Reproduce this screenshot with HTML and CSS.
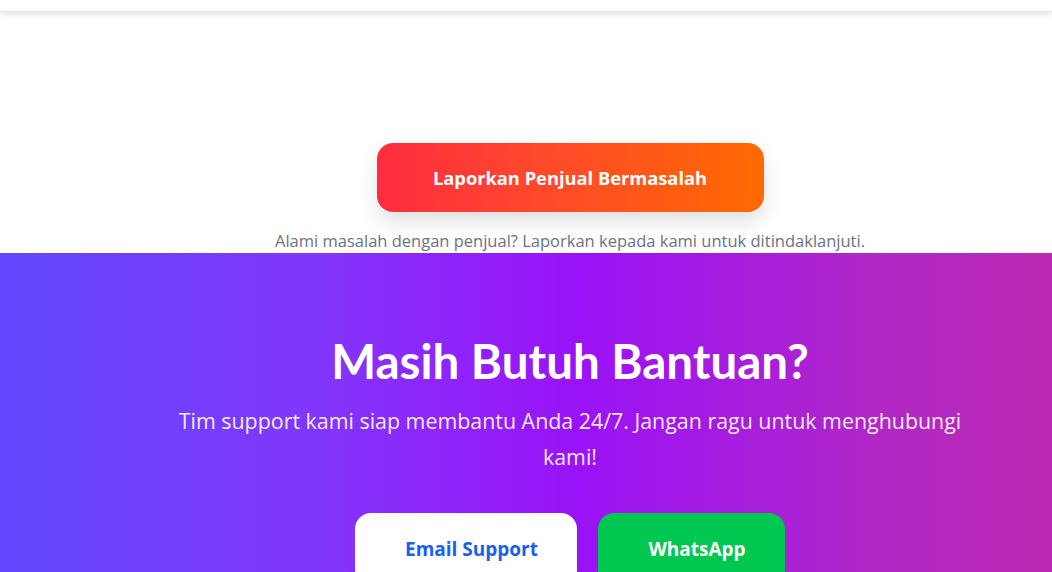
FILE: index.html
```html
<!DOCTYPE html>
<html lang="id">
<head>
<meta charset="utf-8">
<title>Bantuan</title>
<link rel="stylesheet" href="styles.css">
</head>
<body>
<header class="topbar"></header>
<section class="report">
  <button class="report-btn">Laporkan Penjual Bermasalah</button>
  <p class="report-note">Alami masalah dengan penjual? Laporkan kepada kami untuk ditindaklanjuti.</p>
</section>
<section class="cta">
  <h2 class="cta-title">Masih Butuh Bantuan?</h2>
  <p class="cta-text">Tim support kami siap membantu Anda 24/7. Jangan ragu untuk menghubungi kami!</p>
  <div class="cta-actions">
    <a class="btn btn-email" href="#"><span class="btn-icon"></span>Email Support</a>
    <a class="btn btn-wa" href="#"><span class="btn-icon"></span>WhatsApp</a>
  </div>
</section>
</body>
</html>
```
FILE: styles.css
```css
* { box-sizing: border-box; }
html, body { margin: 0; padding: 0; }
body {
  font-family: "Open Sans", sans-serif;
  background: #ffffff;
  overflow: hidden;
  height: 572px;
}
.topbar {
  height: 12px;
  background: #ffffff;
  border-bottom: 1px solid #e6e6e6;
  box-shadow: 0 2px 6px rgba(0,0,0,0.12);
  position: relative;
  z-index: 2;
}
.report {
  display: flex;
  flex-direction: column;
  align-items: center;
  padding: 131px 0 0 88px;
}
.report-btn {
  width: 387px;
  height: 69px;
  border: 0;
  border-radius: 16px;
  background: linear-gradient(90deg, #ff2d3f 0%, #ff4a2a 45%, #ff6a00 100%);
  color: #ffffff;
  font-family: inherit;
  font-weight: 700;
  font-size: 18.3px;
  box-shadow: 0 10px 20px rgba(0,0,0,0.12);
  cursor: pointer;
}
.report-note {
  margin: 17px 0 0;
  font-size: 16.5px;
  line-height: 24px;
  color: #6b7280;
}
.cta {
  background: linear-gradient(90deg, #6248fe 0%, #8236fb 30%, #9a12f7 55%, #b228c4 85%, #bc2ab5 100%);
  display: flex;
  flex-direction: column;
  align-items: center;
  padding: 84px 0 0 88px;
  height: 320px;
  color: #ffffff;
  text-align: center;
}
.cta-title {
  margin: 0;
  font-family: Lato, "Open Sans", sans-serif;
  font-size: 47.5px;
  line-height: 48px;
  font-weight: 700;
}
.cta-text {
  margin: 18px 0 0;
  max-width: 800px;
  font-size: 21.4px;
  line-height: 36px;
  color: rgba(255,255,255,0.92);
}
.cta-actions {
  display: flex;
  gap: 21px;
  margin-top: 38px;
}
.btn {
  display: flex;
  align-items: center;
  justify-content: center;
  height: 72px;
  border-radius: 16px;
  font-size: 19px;
  font-weight: 700;
  text-decoration: none;
}
.btn-icon {
  display: inline-block;
  width: 0;
  margin-right: 11px;
}
.btn-email {
  width: 222px;
  background: #ffffff;
  color: #1a5ef0;
}
.btn-wa {
  width: 187px;
  background: #00c74f;
  color: #ffffff;
}
```
